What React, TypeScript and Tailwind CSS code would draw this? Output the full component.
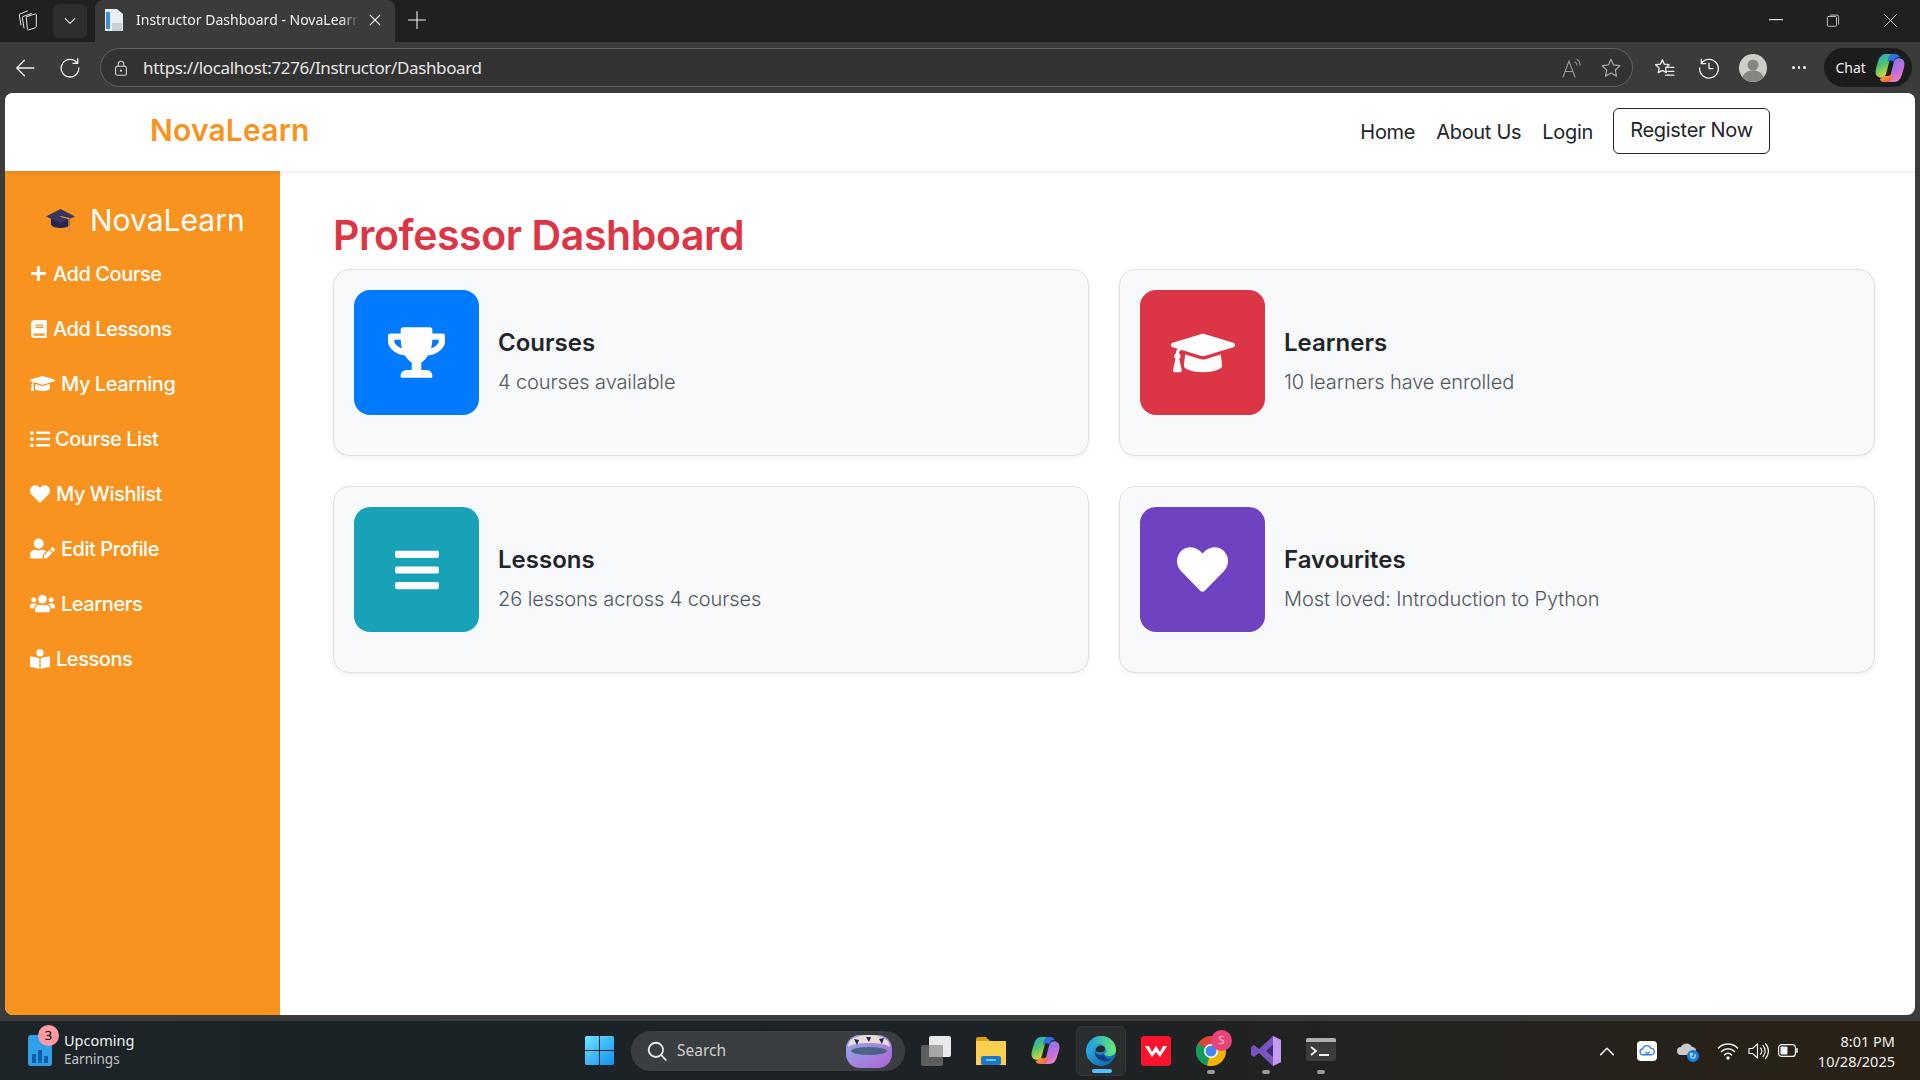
import type { ReactNode } from "react";
import {
  FaPlus,
  FaBook,
  FaGraduationCap,
  FaListUl,
  FaHeart,
  FaUserEdit,
  FaUsers,
  FaBookReader,
  FaTrophy,
  FaBars,
} from "react-icons/fa";

const sideLinks = [
  { label: "Add Course", icon: <FaPlus size={17} />, w: "w-[23px]" },
  { label: "Add Lessons", icon: <FaBook size={18} />, w: "w-[23px]" },
  { label: "My Learning", icon: <FaGraduationCap size={25} />, w: "w-[31px]" },
  { label: "Course List", icon: <FaListUl size={20} />, w: "w-[25px]" },
  { label: "My Wishlist", icon: <FaHeart size={20} />, w: "w-[26px]" },
  { label: "Edit Profile", icon: <FaUserEdit size={25} />, w: "w-[31px]" },
  { label: "Learners", icon: <FaUsers size={25} />, w: "w-[31px]" },
  { label: "Lessons", icon: <FaBookReader size={20} />, w: "w-[26px]" },
];

const cards = [
  { title: "Courses", text: "4 courses available", color: "bg-[#007bff]", icon: <FaTrophy size={57} /> },
  { title: "Learners", text: "10 learners have enrolled", color: "bg-[#dc3545]", icon: <FaGraduationCap size={64} /> },
  { title: "Lessons", text: "26 lessons across 4 courses", color: "bg-[#17a2b8]", icon: <FaBars size={50} /> },
  { title: "Favourites", text: "Most loved: Introduction to Python", color: "bg-[#6f42c1]", icon: <FaHeart size={51} /> },
];

const Stroke = ({ size = 20, children, color = "#e8e8e8", sw = 1.3 }: { size?: number; children: ReactNode; color?: string; sw?: number }) => (
  <svg width={size} height={size} viewBox="0 0 20 20" fill="none" stroke={color} strokeWidth={sw} strokeLinecap="round" strokeLinejoin="round">
    {children}
  </svg>
);

const CopilotIcon = ({ size = 28 }: { size?: number }) => (
  <svg width={size} height={size} viewBox="0 0 28 28">
    <defs>
      <linearGradient id="copA" x1="0" y1="0" x2="0.5" y2="1">
        <stop offset="0" stopColor="#1f9fe8" />
        <stop offset="0.5" stopColor="#4fc46a" />
        <stop offset="1" stopColor="#f5d53a" />
      </linearGradient>
      <linearGradient id="copB" x1="0.2" y1="0" x2="0.8" y2="1">
        <stop offset="0" stopColor="#6a7ff0" />
        <stop offset="0.6" stopColor="#c66be0" />
        <stop offset="1" stopColor="#f48ab8" />
      </linearGradient>
      <linearGradient id="copC" x1="0" y1="0" x2="1" y2="1">
        <stop offset="0" stopColor="#f8b93a" />
        <stop offset="1" stopColor="#f0503a" />
      </linearGradient>
    </defs>
    <path d="M10 1h9c-3 .5-4.500 2.500-5.400 6l-3.100 12c-.6 2.500-2.200 4-4.500 4C3 23 .5 21 .5 18c0-2.500 1-6 2.500-10.500C4.300 3.500 6.500 1 10 1z" fill="url(#copA)" />
    <path d="M18 27H9c3-.5 4.500-2.500 5.400-6l3.100-12c.6-2.500 2.200-4 4.500-4 3 0 5.500 2 5.500 5 0 2.500-1 6-2.500 10.500C23.700 24.500 21.500 27 18 27z" fill="url(#copB)" />
    <path d="M8 21c3.500 1 6.500.5 9.500-2-1 4-2 6.500-5 8H8c-2 0-3.500-1.500-3.500-3 1.500 0 2.700-1 3.500-3z" fill="url(#copC)" />
    <path d="M10 1h8.500c2 0 4 1 4.500 3-3-.3-4.500 1-5.500 4-2.500-1.500-4.500-1.500-6 .5C12 5 13 2.500 15 1z" fill="#2f6fe8" />
  </svg>
);

const TabStrip = () => (
  <div className="flex h-[42px] items-center bg-[#202020]">
    <div className="mb-[2px] ml-[17px] flex w-[22px] justify-center">
      <svg width="22" height="22" viewBox="0 0 22 22" fill="none" stroke="#e8e8e8" strokeWidth="1" strokeLinejoin="round" strokeLinecap="round">
        <path d="M10 7.500l8-2.500c.8-.2 1.300.2 1.300 1v11.500c0 .6-.3 1-.9 1.200l-6.600 2.200c-.8.2-1.300-.1-1.400-.9L9.300 8.500c-.1-.5.200-.8.700-1z" />
        <path d="M7 19l-1.600-10.500c-.1-.5.100-.9.600-1l8.500-3" />
        <path d="M4 16L2.300 6c-.1-.5.100-.9.600-1l7.600-3" />
      </svg>
    </div>
    <div className="ml-[14px] flex h-[34px] w-[34px] items-center justify-center rounded-md bg-[#2e2e2e]">
      <Stroke size={16}><path d="M4 7l6 6 6-6" /></Stroke>
    </div>
    <div className="ml-[8px] flex h-[42px] w-[300px] items-center self-end rounded-t-lg bg-[#3b3b3b] pl-[9px]">
      <svg width="20" height="24" viewBox="0 0 20 24" className="mb-[2px]">
        <path d="M1 1h12l6 5v17H1z" fill="#e8eef4" />
        <rect x="2" y="4" width="4" height="17" fill="#3f8fd0" />
        <rect x="8" y="15" width="10" height="8" fill="#c8ced4" />
      </svg>
      <span className="mb-[2px] ml-[12px] w-[223px] overflow-hidden whitespace-nowrap text-[14px] leading-[20px] text-[#f0f0f0] [font-family:'Noto_Sans',sans-serif] [mask-image:linear-gradient(to_right,black_92%,transparent)]">
        Instructor Dashboard - NovaLearn
      </span>
      <span className="mb-[2px] ml-[9px]">
        <Stroke size={14} color="#f2f2f2" sw={1.7}><path d="M3 3l14 14M17 3L3 17" /></Stroke>
      </span>
    </div>
    <div className="mb-[2px] ml-[12px]">
      <Stroke size={20} color="#f2f2f2" sw={1.1}><path d="M10 1.500v17M1.500 10h17" /></Stroke>
    </div>
    <div className="mb-[2px] ml-auto flex items-center">
      <svg width="14" height="2" className="mr-[43px]"><rect width="14" height="1.200" fill="#f0f0f0" /></svg>
      <span className="mr-[43px]">
        <Stroke size={14} sw={1.100}><rect x="2" y="5" width="13" height="14" rx="1.500" /><path d="M6 3h10c1.200 0 2 .8 2 2v11" /></Stroke>
      </span>
      <span className="mr-[22px]">
        <Stroke size={15} sw={1.100}><path d="M2 2l16 16M18 2L2 18" /></Stroke>
      </span>
    </div>
  </div>
);

const ToolBar = () => (
  <div className="flex h-[51px] items-center bg-[#3b3b3b]">
    <span className="ml-[14px]">
      <Stroke size={22} color="#f0f0f0" sw={1.200}><path d="M18 10H2.500M9.500 3l-7 7 7 7" /></Stroke>
    </span>
    <span className="ml-[23px]">
      <Stroke size={22} color="#f0f0f0" sw={1.200}><path d="M16.500 5.500A8 8 0 1 0 18 10M17 1.500v4.300h-4.300" /></Stroke>
    </span>
    <div className="ml-[19px] flex h-[39px] w-[1533px] items-center rounded-full border border-[#626262] bg-[#333333] pl-[11px]">
      <Stroke size={18} color="#d5d5d5" sw={1.200}>
        <rect x="4" y="8" width="12" height="10" rx="2" />
        <path d="M7 8V5.500a3 3 0 0 1 6 0V8" />
        <circle cx="10" cy="13" r=".6" fill="#d5d5d5" />
      </Stroke>
      <span className="ml-[13px] text-[17px] tracking-[-0.36px] text-[#e6e6e6] [font-family:'Noto_Sans',sans-serif]">https://localhost:7276/Instructor/Dashboard</span>
      <div className="ml-auto mr-[10px] flex items-center gap-[17px]">
        <svg width="22" height="22" viewBox="0 0 22 22" fill="none" stroke="#9a9a9a" strokeWidth="1.100" strokeLinecap="round">
          <path d="M2 20L8 4l6 16M4.500 14.500h7M14 5c1.500.8 2 1.800 2 3M16 2.500c2.200 1.200 3.200 3 3 5.500" />
        </svg>
        <Stroke size={22} color="#a8a8a8" sw={1.100}><path d="M10 2l2.400 5.200 5.600.7-4.100 3.900 1.100 5.600-5-2.800-5 2.800 1.100-5.600L2 7.900l5.600-.7z" /></Stroke>
      </div>
    </div>
    <span className="ml-[20px]">
      <Stroke size={22} color="#f0f0f0" sw={1.200}><path d="M8.500 2.500l1.800 4 4.300.5-3.200 3 .8 4.200-3.700-2-3.700 2 .8-4.200-3.200-3 4.300-.5zM13.500 9.500H19M13.500 13H19M11.500 16.500H19" /></Stroke>
    </span>
    <span className="ml-[23px]">
      <Stroke size={22} color="#f0f0f0" sw={1.200}><path d="M3.200 5.500A8.500 8.500 0 1 1 1.500 10M3 2v4h4M10 5.500V10.500h3.500" /></Stroke>
    </span>
    <svg width="28" height="28" viewBox="0 0 28 28" className="ml-[19px]">
      <circle cx="14" cy="14" r="14" fill="#cfcdc8" />
      <circle cx="14" cy="11" r="5.500" fill="#878580" />
      <path d="M3.500 23c2-5 6-6.500 10.500-6.500S22.500 18 24.500 23a14 14 0 0 1-21 0z" fill="#878580" />
    </svg>
    <span className="ml-[25px] flex gap-[3px]">
      <i className="block h-[2.500px] w-[2.500px] rounded-full bg-[#eee]" />
      <i className="block h-[2.500px] w-[2.500px] rounded-full bg-[#eee]" />
      <i className="block h-[2.500px] w-[2.500px] rounded-full bg-[#eee]" />
    </span>
    <div className="ml-[18px] flex h-[39px] w-[88px] items-center rounded-full bg-[#1c1c1c] pl-[12px]">
      <span className="text-[14px] text-[#f2f2f2] [font-family:'Noto_Sans',sans-serif]">Chat</span>
      <span className="ml-[9px]"><CopilotIcon size={30} /></span>
    </div>
  </div>
);

const NavBar = () => (
  <header className="relative z-10 flex h-[78px] items-center bg-white pb-[3px] pl-[145px] pr-[145px] shadow-[0_2px_4px_rgba(0,0,0,0.08)]">
    <span className="text-[30px] font-semibold tracking-[0.2px] text-[#f7931e]">NovaLearn</span>
    <nav className="ml-auto flex items-center text-[20px] text-[#212529]">
      <a className="mt-[2px] tracking-[-0.3px]">Home</a>
      <a className="ml-[21px] mt-[2px] tracking-[-0.3px]">About Us</a>
      <a className="ml-[21px] mt-[2px] tracking-[-0.3px]">Login</a>
      <button className="ml-[20px] h-[46px] w-[157px] rounded-md border border-[#212529] pb-[1px] text-[20px] tracking-[-0.3px]">Register Now</button>
    </nav>
  </header>
);

const SideBar = () => (
  <aside className="flex w-[275px] flex-col bg-[#f7931e] text-white">
    <div className="flex h-[75px] items-center pl-[40px] pt-[23px]">
      <svg width="31" height="28" viewBox="0 0 31 28">
        <path d="M6 12v7c3 4 16 4 19 0v-7z" fill="#2a2550" />
        <path d="M15.500 3L30 10.500 15.500 17 1 10.500z" fill="#3a3560" />
        <path d="M15.500 10.500L24 12.500V21" fill="none" stroke="#eba636" strokeWidth="1.200" />
        <rect x="22.800" y="20" width="2.400" height="6.500" rx="1" fill="#f07f55" />
      </svg>
      <span className="ml-[14px] text-[30px] font-normal">NovaLearn</span>
    </div>
    {sideLinks.map((l) => (
      <a key={l.label} className="flex h-[55px] items-center pl-[25px] text-[20px] font-medium tracking-[-0.45px]">
        <span className={`${l.w} flex shrink-0 items-center`}>{l.icon}</span>
        {l.label}
      </a>
    ))}
  </aside>
);

const StatCard = ({ title, text, color, icon }: (typeof cards)[number]) => (
  <div className="rounded-2xl border border-[#dfe2e5] bg-[#f8f9fa] p-[20px] pb-[40px] shadow-[0_2px_4px_rgba(0,0,0,0.06)]">
    <div className="flex items-center">
      <div className={`${color} flex h-[125px] w-[125px] shrink-0 items-center justify-center rounded-2xl text-white`}>{icon}</div>
      <div className="ml-[19px]">
        <h5 className="mt-[19px] text-[24px] font-semibold leading-[29px] text-[#212529]">{title}</h5>
        <p className="mt-[10px] text-[20px] font-light leading-[30px] tracking-[-0.1px] text-[#50575e]">{text}</p>
      </div>
    </div>
  </div>
);

const TaskBar = () => (
  <div className="flex h-[59px] items-center bg-gradient-to-r from-[#1c2428] via-[#1c2226] to-[#2a2116] text-white [font-family:'Noto_Sans',sans-serif]">
    <div className="relative ml-[28px] h-[31px] w-[24px]">
      <svg width="24" height="31" viewBox="0 0 24 31">
        <rect width="24" height="31" rx="3" fill="#2f9fe8" />
        <rect x="4" y="19" width="4" height="9" fill="#0f5fa8" />
        <rect x="10" y="15" width="4" height="13" fill="#0f5fa8" />
        <rect x="16" y="21" width="4" height="7" fill="#0f5fa8" />
      </svg>
      <span className="absolute left-[10px] top-[-10px] flex h-[21px] w-[21px] items-center justify-center rounded-full bg-[#ff9aa2] text-[13px] text-black">3</span>
    </div>
    <div className="mb-[2px] ml-[12px] w-[80px] leading-[19px]">
      <div className="text-[14.500px] text-[#f2f2f2]">Upcoming</div>
      <div className="text-[13.500px] text-[#c5c5c5]">Earnings</div>
    </div>
    <svg width="29" height="29" viewBox="0 0 29 29" className="ml-[441px]">
      <defs>
        <linearGradient id="winG" x1="0" y1="0" x2="1" y2="1">
          <stop offset="0" stopColor="#6fe3ff" />
          <stop offset="1" stopColor="#0f8ff0" />
        </linearGradient>
      </defs>
      <path d="M0 1.500A1.500 1.500 0 0 1 1.500 0H14v14H0zM15 0h12.500A1.500 1.500 0 0 1 29 1.500V14H15zM0 15h14v14H1.500A1.500 1.500 0 0 1 0 27.500zM15 15h14v12.500a1.500 1.500 0 0 1-1.500 1.500H15z" fill="url(#winG)" />
    </svg>
    <div className="ml-[17px] flex h-[40px] w-[274px] items-center rounded-full bg-[#3a3e40] pl-[15px]">
      <Stroke size={22} color="#e8e8e8" sw={1.700}><circle cx="9" cy="9" r="6.500" /><path d="M13.800 13.800L18 18" /></Stroke>
      <span className="ml-[9px] text-[15.500px] text-[#d0d0d0]">Search</span>
      <svg width="48" height="36" viewBox="0 0 48 36" className="ml-auto mr-[12px]">
        <defs>
          <linearGradient id="srchG" x1="0" y1="0" x2="1" y2="1">
            <stop offset="0" stopColor="#8fb0e8" />
            <stop offset="1" stopColor="#b060d8" />
          </linearGradient>
        </defs>
        <rect x="1" y="2" width="46" height="33" rx="14" fill="url(#srchG)" />
        <path d="M3 14C3 6 12 2 24 2s21 4 21 12c-4-3-12-4-21-4S7 11 3 14z" fill="#ecdcd8" />
        <ellipse cx="24" cy="18" rx="18" ry="4" fill="#4a6488" />
        <path d="M9 6l5 1-2 5zM21 4h5l-2 5zM34 6l5-1-2 6z" fill="#1a2a60" />
      </svg>
    </div>
    <svg width="30" height="30" viewBox="0 0 30 30" className="ml-[16px]">
      <rect x="0" y="9" width="22" height="21" rx="2" fill="#5c5c5c" />
      <rect x="8" y="0" width="22" height="21" rx="2" fill="#e9e9e9" />
      <rect x="8" y="9" width="14" height="12" fill="#a8a8a8" />
    </svg>
    <svg width="30" height="28" viewBox="0 0 30 28" className="ml-[25px]">
      <path d="M0 2a2 2 0 0 1 2-2h8l4 4h-14z" fill="#d9a015" />
      <rect y="4" width="30" height="24" fill="#f8cf4e" />
      <rect x="5" y="19" width="20" height="9" rx="2" fill="#1c78c4" />
      <rect x="10" y="22" width="10" height="2" fill="#6ac0f0" />
    </svg>
    <span className="ml-[25px]"><CopilotIcon size={29} /></span>
    <div className="relative ml-[16px] flex h-[50px] w-[50px] items-center justify-center rounded-md border border-[#333739] bg-[#2a2e30]">
      <svg width="30" height="30" viewBox="0 0 30 30">
        <defs>
          <linearGradient id="edgeA" x1="0" y1="0" x2="1" y2="1">
            <stop offset="0" stopColor="#35c1f1" />
            <stop offset="1" stopColor="#0c59a4" />
          </linearGradient>
          <linearGradient id="edgeB" x1="0" y1="0" x2="1" y2="0">
            <stop offset="0" stopColor="#1b9de2" />
            <stop offset="1" stopColor="#66eb6e" />
          </linearGradient>
        </defs>
        <circle cx="15" cy="15" r="15" fill="url(#edgeA)" />
        <path d="M2 9C5 3 10 0 15 0c8 0 15 6 15 14 0 4-3 6-7 6-3 0-5-1-5-2 2-1 3-3 2-5-1-3-4-5-8-5S5 9 2 13z" fill="url(#edgeB)" />
        <path d="M18 18c-3 2-8 1-9-3-1 5 3 9 8 10 3 1 6 0 8-2-3 1-6-1-7-5z" fill="#0a3f80" />
        <path d="M9.500 15c0-3 2.500-5.500 5.500-5.500 2.500 0 4 1.500 4 3.500 0 1-.5 2-1.500 2.500-1 .7-5 1.500-8-.5z" fill="#24282a" />
      </svg>
      <span className="absolute bottom-[2px] left-[15px] h-[4px] w-[20px] rounded-full bg-[#4cc2ff]" />
    </div>
    <svg width="30" height="30" viewBox="0 0 30 30" className="ml-[15px]">
      <rect width="30" height="30" rx="3" fill="#f8142c" />
      <path d="M4 10h4l3 6 4-6 4 6 3-6h4l-7 11-4-5-4 5z" fill="#fff" />
    </svg>
    <div className="relative ml-[25px] h-[30px] w-[30px]">
      <svg width="30" height="30" viewBox="0 0 30 30">
        <circle cx="15" cy="15" r="15" fill="#db4437" />
        <path d="M15 15L2 7.500A15 15 0 0 0 11 29.500z" fill="#0f9d58" />
        <path d="M15 15l-4 14.500A15 15 0 0 0 30 15 15 15 0 0 0 28 7.500z" fill="#f4b400" />
        <circle cx="15" cy="15" r="7" fill="#fff" />
        <circle cx="15" cy="15" r="5.500" fill="#4285f4" />
      </svg>
      <span className="absolute left-[15px] top-[-6px] flex h-[21px] w-[21px] items-center justify-center rounded-full bg-[#e8447c] text-[11px] text-[#ffc6d8]">S</span>
      <span className="absolute bottom-[-8px] left-[11px] h-[4px] w-[8px] rounded-full bg-[#9a9a9a]" />
    </div>
    <div className="relative ml-[25px] h-[30px] w-[30px]">
      <svg width="30" height="30" viewBox="0 0 30 30">
        <path d="M22 0l8 4v22l-8 4-14-13-5 4-3-2V11l3-2 5 4z" fill="#7a55c0" />
        <path d="M22 0l8 4v22l-8 4z" fill="#c49bf0" />
        <path d="M22 9v12l-7-6z" fill="#3a2a70" />
      </svg>
      <span className="absolute bottom-[-8px] left-[11px] h-[4px] w-[8px] rounded-full bg-[#9a9a9a]" />
    </div>
    <div className="relative ml-[25px] h-[30px] w-[30px]">
      <svg width="30" height="26" viewBox="0 0 30 26" className="mt-[2px]">
        <rect width="30" height="22" y="1" rx="2" fill="#3c3c3c" />
        <path d="M2 0h26a2 2 0 0 1 2 2v2H0V2a2 2 0 0 1 2-2z" fill="#b0b0b0" />
        <path d="M5 9l5 4-5 4" fill="none" stroke="#f0f0f0" strokeWidth="1.800" />
        <rect x="13" y="16" width="10" height="2" fill="#f0f0f0" />
      </svg>
      <span className="absolute bottom-[-8px] left-[11px] h-[4px] w-[8px] rounded-full bg-[#9a9a9a]" />
    </div>
    <span className="ml-[262px]"><Stroke size={18} color="#f0f0f0" sw={1.700}><path d="M3 14l7-7 7 7" /></Stroke></span>
    <div className="ml-[21px] flex h-[20px] w-[20px] items-center justify-center rounded-sm bg-white">
      <Stroke size={17} color="#2d7fe8" sw={1.500}><path d="M5 15a3.500 3.500 0 0 1-.5-7A5 5 0 0 1 14 7.500 3.800 3.800 0 0 1 15 15zM8 12l2 2 2-2" /></Stroke>
    </div>
    <div className="relative ml-[20px] h-[20px] w-[20px]">
      <svg width="20" height="16" viewBox="0 0 20 16"><path d="M4 14a4 4 0 0 1 0-8 6 6 0 0 1 11 0 4 4 0 0 1 0 8z" fill="#c9c9c9" /></svg>
      <span className="absolute bottom-[-1px] right-[-2px] flex h-[12px] w-[12px] items-center justify-center rounded-full bg-[#0f7fe0] text-[9px] leading-none">↻</span>
    </div>
    <span className="ml-[20px]">
      <svg width="22" height="18" viewBox="0 0 22 18" fill="none" stroke="#f0f0f0" strokeWidth="1.500" strokeLinecap="round">
        <path d="M1.500 6a13.500 13.500 0 0 1 19 0M4.500 9.500a9 9 0 0 1 13 0M7.500 13a4.500 4.500 0 0 1 7 0" />
        <circle cx="11" cy="16" r="1" fill="#f0f0f0" />
      </svg>
    </span>
    <span className="ml-[9px]">
      <svg width="21" height="18" viewBox="0 0 21 18" fill="none" stroke="#f0f0f0" strokeWidth="1.200" strokeLinejoin="round" strokeLinecap="round">
        <path d="M1 6.500h3.500L9.500 2v14l-5-4.500H1zM12.500 6a4 4 0 0 1 0 6M15 3.500a8 8 0 0 1 0 11M17.500 1.500a11 11 0 0 1 0 15" />
      </svg>
    </span>
    <span className="ml-[9px]">
      <svg width="20" height="13" viewBox="0 0 20 13">
        <rect x=".6" y=".6" width="16.800" height="11.800" rx="3" fill="none" stroke="#f0f0f0" strokeWidth="1.200" />
        <rect x="2.500" y="2.500" width="7" height="8" rx="1" fill="#f0f0f0" />
        <rect x="18.200" y="4" width="1.600" height="5" rx=".8" fill="#f0f0f0" />
      </svg>
    </span>
    <div className="ml-auto mr-[25px] text-right text-[14.500px] leading-[20px] text-[#f0f0f0]">
      <div>8:01 PM</div>
      <div>10/28/2025</div>
    </div>
  </div>
);

const App = () => {
  return (
    <div className="flex h-screen w-screen flex-col overflow-hidden bg-[#3b3b3b] [font-family:'Inter',sans-serif]">
      <TabStrip />
      <ToolBar />
      <div className="mx-[5px] flex h-[922px] flex-col overflow-hidden rounded-lg bg-white">
        <NavBar />
        <div className="flex flex-1">
          <SideBar />
          <main className="flex-1 pl-[53px] pr-[40px] pt-[40px]">
            <h1 className="mb-[10px] text-[41px] font-semibold leading-[48px] tracking-[-0.4px] text-[#dc3545]">Professor Dashboard</h1>
            <div className="grid grid-cols-2 gap-[30px]">
              {cards.map((c) => (
                <StatCard key={c.title} {...c} />
              ))}
            </div>
          </main>
        </div>
      </div>
      <div className="h-[6px] shrink-0" />
      <TaskBar />
    </div>
  );
};

export default App;
